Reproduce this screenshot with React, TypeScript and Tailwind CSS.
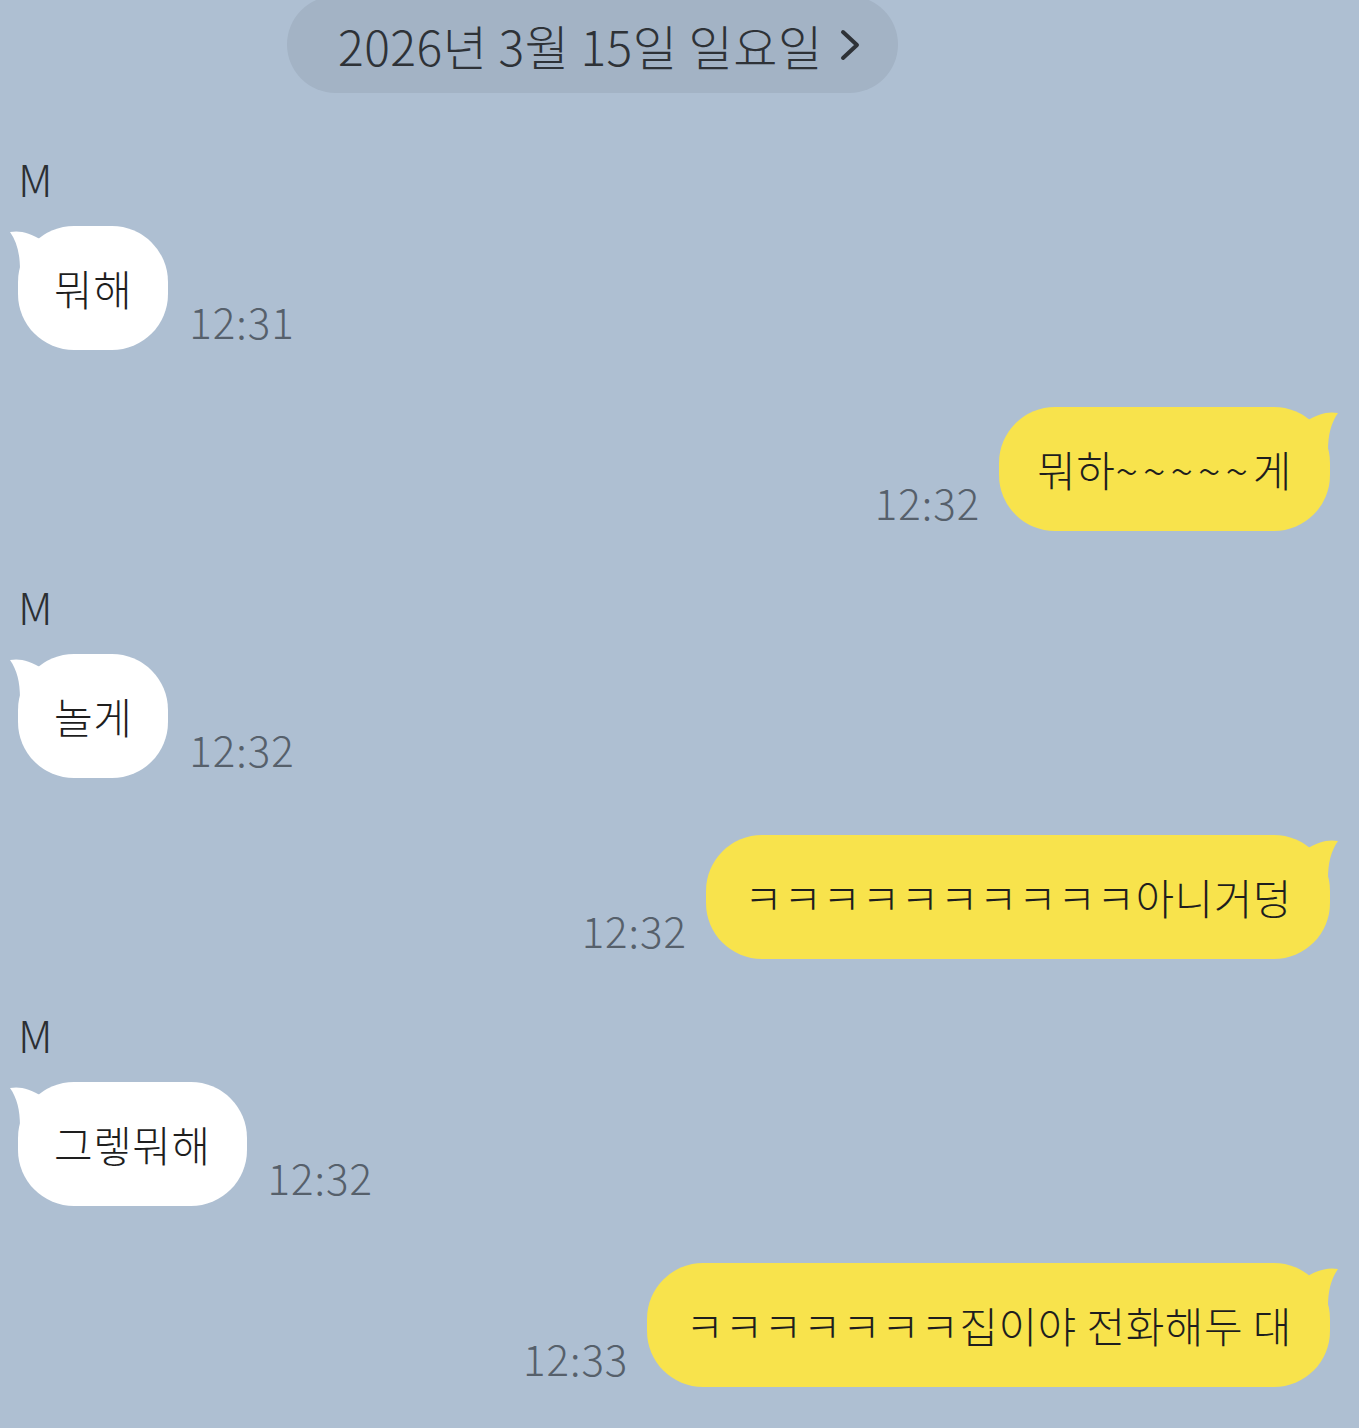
import React from 'react';

type Msg = { from: 'them' | 'me'; name?: string; text: string; time: string };

const messages: Msg[] = [
    { from: 'them', name: 'M', text: '뭐해', time: '12:31' },
    { from: 'me', text: '뭐하~~~~~게', time: '12:32' },
    { from: 'them', name: 'M', text: '놀게', time: '12:32' },
    { from: 'me', text: 'ㅋㅋㅋㅋㅋㅋㅋㅋㅋㅋ아니거덩', time: '12:32' },
    { from: 'them', name: 'M', text: '그렣뭐해', time: '12:32' },
    { from: 'me', text: 'ㅋㅋㅋㅋㅋㅋㅋ집이야 전화해두 대', time: '12:33' },
];

const font = { fontFamily: '"Noto Sans CJK KR", "Noto Sans", sans-serif' };

// tildes in the kakao font run wider than in Noto, so space them out a bit
const renderText = (text: string) =>
    text.split(/(~+)/).map((part, i) =>
        part.startsWith('~') ? (
            <span key={i} className="tracking-[5px]">
                {part}
            </span>
        ) : (
            part
        )
    );

const Tail = ({ side, color }: { side: 'left' | 'right'; color: string }) => (
    <svg
        width="40"
        height="44"
        viewBox="0 0 40 44"
        className={side === 'left' ? 'absolute -left-[8px] top-0' : 'absolute -right-[8px] top-0 -scale-x-100'}
    >
        <path d="M0 6 C10 4 20 7 32 14 L32 44 L10 44 C10 28 7 16 0 6 Z" fill={color} />
    </svg>
);

const Time = ({ value }: { value: string }) => (
    <span className="mb-[8px] text-[42px] font-light leading-none tracking-[1px] text-[#56606b]">{value}</span>
);

const Theirs = ({ msg, first }: { msg: Msg; first: boolean }) => (
    <div className={first ? 'mt-[63px] pl-[18px]' : 'mt-[53px] pl-[18px]'}>
        <div className="text-[44px] font-light leading-none text-[#2b2f33]">{msg.name}</div>
        <div className="mt-[26px] flex items-end gap-[21px]">
            <div className="relative flex h-[124px] items-center rounded-[56px] bg-white px-[36px]">
                <Tail side="left" color="#ffffff" />
                <span className="relative text-[42px] font-light leading-none tracking-[0.5px] text-[#1e1e1e]">
                    {renderText(msg.text)}
                </span>
            </div>
            <Time value={msg.time} />
        </div>
    </div>
);

const Mine = ({ msg }: { msg: Msg }) => (
    <div className="mt-[57px] flex items-end justify-end gap-[19px] pr-[29px]">
        <Time value={msg.time} />
        <div className="relative flex h-[124px] items-center rounded-[56px] bg-[#f8e34c] px-[38px]">
            <Tail side="right" color="#f8e34c" />
            <span className="relative text-[42px] font-light leading-none tracking-[0.5px] text-[#1e1e1e]">
                {renderText(msg.text)}
            </span>
        </div>
    </div>
);

export default function App() {
    return (
        <div className="h-[1428px] w-full overflow-hidden bg-[#aebfd2]" style={font}>
            <div className="pl-[287px]">
                <div className="-mt-[4px] flex h-[97px] w-[611px] items-center gap-[16px] rounded-full bg-[#a3b3c5] pl-[51px]">
                    <span className="text-[48px] font-light leading-none tracking-[0.5px] text-[#2e3237]">
                        2026년 3월 15일 일요일
                    </span>
                    <svg width="22" height="32" viewBox="0 0 22 32">
                        <path d="M4 3 L18 16 L4 29" fill="none" stroke="#2e3237" strokeWidth="4" strokeLinecap="round" strokeLinejoin="round" />
                    </svg>
                </div>
            </div>
            {messages.map((m, i) =>
                m.from === 'them' ? <Theirs key={i} msg={m} first={i === 0} /> : <Mine key={i} msg={m} />
            )}
        </div>
    );
}
